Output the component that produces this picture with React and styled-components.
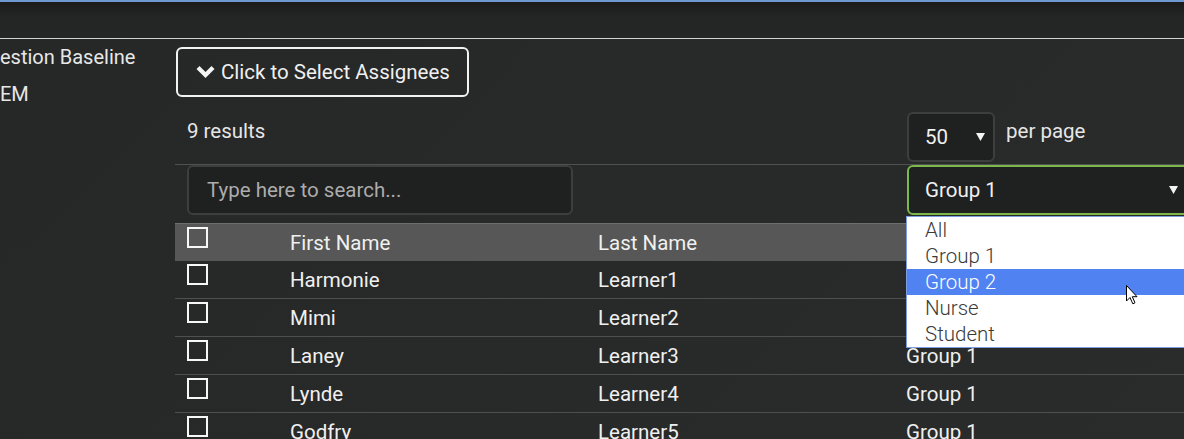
import React from "react";
import styled, { createGlobalStyle } from "styled-components";

const GlobalStyle = createGlobalStyle`
  html, body { margin: 0; padding: 0; }
  body {
    background: #272828;
    font-family: Roboto, "Liberation Sans", sans-serif;
    color: #ececec;
    overflow: hidden;
    width: 1184px;
    height: 439px;
  }
  * { box-sizing: border-box; }
`;

const Page = styled.div`
  width: 1184px;
  height: 439px;
  overflow: hidden;
  background: linear-gradient(135deg, #262727 0%, #282929 60%, #2a2b2b 100%);
`;

const TopBar = styled.div`
  height: 39px;
  border-top: 2px solid #7099d3;
  border-bottom: 1px solid #d2d2d2;
  background: linear-gradient(#1b1b1b, #242525 40%, #252626);
`;

const Body = styled.div`
  display: flex;
`;

const Sidebar = styled.div`
  width: 175px;
  flex: none;
  font-size: 20px;
  line-height: 37px;
  color: #e8e8e8;
  white-space: nowrap;
`;

const Main = styled.div`
  flex: none;
  width: 1030px;
  padding-top: 8px;
`;

const AssignButton = styled.button`
  margin-left: 1px;
  height: 50px;
  padding: 0 17px 0 18px;
  display: inline-flex;
  align-items: center;
  gap: 6px;
  background: transparent;
  border: 2px solid #f2f2f2;
  border-radius: 6px;
  color: #f0f0f0;
  font-family: Roboto, "Liberation Sans", sans-serif;
  font-size: 20.5px;
`;

const Chevron = () => (
  <svg width="19" height="14" viewBox="0 0 19 14">
    <path d="M0.5 4 L3.5 1 L9.5 7 L15.5 1 L18.5 4 L9.5 13 Z" fill="#f4f4f4" />
  </svg>
);

const ResultsBar = styled.div`
  display: flex;
  align-items: flex-start;
  padding: 15px 0 2px;
`;

const ResultsCount = styled.div`
  width: 732px;
  padding-left: 12px;
  font-size: 20.5px;
  line-height: 38px;
  color: #e6e6e6;
`;

const SelectBox = styled.div`
  position: relative;
  height: 50px;
  width: ${(p) => p.$width}px;
  display: flex;
  align-items: center;
  justify-content: space-between;
  padding: 0 ${(p) => p.$padRight}px 0 16px;
  background: #1f2020;
  border: 2px solid ${(p) => (p.$focus ? "#7cb84c" : "#3d3e3e")};
  border-radius: 6px;
  font-size: 20.5px;
  color: #f0f0f0;
`;

const Caret = () => (
  <svg width="9" height="8" viewBox="0 0 9 8">
    <path d="M0 0 H9 L4.5 8 Z" fill="#f4f4f4" />
  </svg>
);

const PerPageLabel = styled.div`
  margin-left: 11px;
  font-size: 20.5px;
  line-height: 38px;
  color: #e6e6e6;
`;

const FilterRow = styled.div`
  display: flex;
  align-items: flex-start;
  border-top: 1px solid #4f5050;
  height: 59px;
`;

const SearchInput = styled.input`
  margin-left: 12px;
  width: 386px;
  height: 50px;
  padding: 0 18px;
  background: #1f2020;
  border: 2px solid #3d3e3e;
  border-radius: 6px;
  color: #eee;
  font-family: Roboto, "Liberation Sans", sans-serif;
  font-size: 20.5px;
  outline: none;
  &::placeholder { color: #acacac; }
`;

const GroupFilter = styled.div`
  position: relative;
  margin-left: 334px;
`;

const OptionList = styled.ul`
  position: absolute;
  top: 51px;
  left: -1px;
  width: 290px;
  margin: 0;
  padding: 0;
  list-style: none;
  background: #ffffff;
  border: 1px solid #7c9be0;
  z-index: 5;
`;

const OptionItem = styled.li`
  height: 26px;
  line-height: 26px;
  padding-left: 18px;
  font-size: 20.5px;
  font-weight: 300;
  color: ${(p) => (p.$active ? "#ffffff" : "#3a3a3a")};
  background: ${(p) => (p.$active ? "#5182f2" : "transparent")};
`;

const Cursor = styled.svg`
  position: absolute;
  left: 219px;
  top: 120px;
  z-index: 6;
`;

const Table = styled.div`
  width: 1030px;
`;

const Row = styled.div`
  display: grid;
  grid-template-columns: 103px 308px 308px 311px;
  height: 38px;
  background: ${(p) => (p.$head ? "#565756" : "transparent")};
  border-top: ${(p) => (p.$head ? "1px solid #6c6d6d" : "none")};
  border-bottom: ${(p) => (p.$head ? "none" : "1px solid #4e4f4f")};
`;

const Cell = styled.div`
  padding-left: 12px;
  font-size: 20.5px;
  line-height: 39px;
  color: #f0f0f0;
  white-space: nowrap;
`;

const CheckCell = styled.div`
  padding: 3px 0 0 12px;
`;

const Check = styled.div`
  width: 21px;
  height: 21px;
  border: 2px solid #f7f7f7;
`;

const rows = [
  ["Harmonie", "Learner1", "Group 1"],
  ["Mimi", "Learner2", "Group 1"],
  ["Laney", "Learner3", "Group 1"],
  ["Lynde", "Learner4", "Group 1"],
  ["Godfry", "Learner5", "Group 1"],
];

const options = ["All", "Group 1", "Group 2", "Nurse", "Student"];

export default function App() {
  return (
    <Page>
      <GlobalStyle />
      <TopBar />
      <Body>
        <Sidebar>
          <div>estion Baseline</div>
          <div>EM</div>
        </Sidebar>
        <Main>
          <AssignButton>
            <Chevron />
            Click to Select Assignees
          </AssignButton>
          <ResultsBar>
            <ResultsCount>9 results</ResultsCount>
            <SelectBox $width={88} $padRight={8}>
              50
              <Caret />
            </SelectBox>
            <PerPageLabel>per page</PerPageLabel>
          </ResultsBar>
          <FilterRow>
            <SearchInput placeholder="Type here to search..." />
            <GroupFilter>
              <SelectBox $width={287} $padRight={14} $focus>
                Group 1
                <Caret />
              </SelectBox>
              <OptionList>
                {options.map((o) => (
                  <OptionItem key={o} $active={o === "Group 2"}>
                    {o}
                  </OptionItem>
                ))}
              </OptionList>
              <Cursor width="13" height="20" viewBox="0 0 13 20">
                <path d="M0.5 0.5 V16 L4 12.5 L6.8 18.8 L9 17.8 L6.3 11.7 H11 Z" fill="#ffffff" stroke="#000000" strokeWidth="1" />
              </Cursor>
            </GroupFilter>
          </FilterRow>
          <Table>
            <Row $head>
              <CheckCell><Check /></CheckCell>
              <Cell>First Name</Cell>
              <Cell>Last Name</Cell>
              <Cell>Group</Cell>
            </Row>
            {rows.map((r) => (
              <Row key={r[0]}>
                <CheckCell><Check /></CheckCell>
                <Cell>{r[0]}</Cell>
                <Cell>{r[1]}</Cell>
                <Cell>{r[2]}</Cell>
              </Row>
            ))}
          </Table>
        </Main>
      </Body>
    </Page>
  );
}
